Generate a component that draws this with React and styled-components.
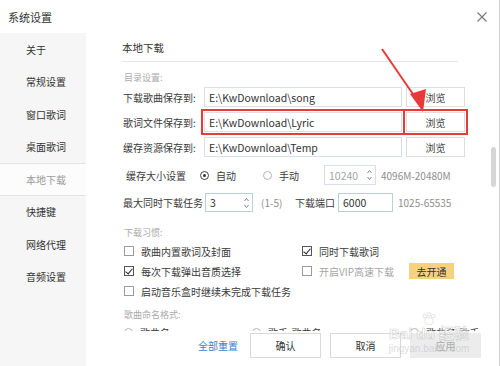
import React from "react";
import styled, { createGlobalStyle } from "styled-components";

const Global = createGlobalStyle`
  html, body { margin: 0; padding: 0; background: #fff; }
  * { box-sizing: border-box; }
`;

const navItems = ["关于", "常规设置", "窗口歌词", "桌面歌词", "本地下载", "快捷键", "网络代理", "音频设置"];

const paths = [
  { label: "下载歌曲保存到:", value: "E:\\KwDownload\\song" },
  { label: "歌词文件保存到:", value: "E:\\KwDownload\\Lyric", marked: true },
  { label: "缓存资源保存到:", value: "E:\\KwDownload\\Temp" },
];

const App = () => {
  return (
    <Window>
      <Global />
      <TitleBar>
        <Title>系统设置</Title>
        <svg width="10" height="10" viewBox="0 0 10 10">
          <path d="M0.5 0.5 L9.5 9.5 M9.5 0.5 L0.5 9.5" stroke="#777" strokeWidth="1.1" />
        </svg>
      </TitleBar>
      <Body>
        <Sidebar>
          {navItems.map((item) => (
            <NavItem key={item} $active={item === "本地下载"}>{item}</NavItem>
          ))}
        </Sidebar>
        <Main>
          <Scroll>
            <Content>
              <Heading>本地下载</Heading>
              <GroupLabel $top={7}>目录设置:</GroupLabel>
              <PathList>
                {paths.map((p) => (
                  <Row key={p.label}>
                    <Label $w={82} $pad={1}>{p.label}</Label>
                    <Field $w={198} $marked={p.marked}>{p.value}</Field>
                    <Browse $marked={p.marked}>浏览</Browse>
                  </Row>
                ))}
              </PathList>

              <Row $top={8}>
                <Label $w={78} $pad={4}>缓存大小设置</Label>
                <RadioOption $w={63}><Radio $on />自动</RadioOption>
                <RadioOption $w={61}><Radio />手动</RadioOption>
                <Field $w={52} $muted>
                  10240
                  <Spin />
                </Field>
                <Hint $left={5}>4096M-20480M</Hint>
              </Row>

              <Row $top={7}>
                <Label $w={83} $pad={1}>最大同时下载任务</Label>
                <Field $w={48} $focus>
                  3
                  <Spin />
                </Field>
                <Hint $w={34} $left={8}>(1-5)</Hint>
                <Label $w={43}>下载端口</Label>
                <Field $w={55} $focus>6000</Field>
                <Hint $left={5}>1025-65535</Hint>
              </Row>

              <GroupLabel $top={12}>下载习惯:</GroupLabel>
              <CheckGrid>
                <Check><Box />歌曲内置歌词及封面</Check>
                <Check><Box $on />同时下载歌词</Check>
                <Check><Box $on />每次下载弹出音质选择</Check>
                <Check $muted>
                  <Box />开启VIP高速下载
                  <VipButton>去开通</VipButton>
                </Check>
                <Check $wide><Box />启动音乐盒时继续未完成下载任务</Check>
              </CheckGrid>

              <GroupLabel $top={5}>歌曲命名格式:</GroupLabel>
              <Row>
                <RadioOption $w={130} $pad={2}><Radio />歌曲名</RadioOption>
                <RadioOption $w={158}><Radio />歌手-歌曲名</RadioOption>
                <RadioOption><Radio />歌曲名-歌手</RadioOption>
              </Row>
            </Content>
            <ScrollTrack>
              <Thumb />
            </ScrollTrack>
          </Scroll>
          <Footer>
            <ResetLink>全部重置</ResetLink>
            <Button>确认</Button>
            <Button>取消</Button>
            <Button $disabled>应用</Button>
          </Footer>
        </Main>
      </Body>

      <Arrow width="500" height="366" viewBox="0 0 500 366">
        <line x1="382" y1="49" x2="417" y2="100" stroke="#e8393b" strokeWidth="2" />
        <polygon points="423,112 410,94 426,89" fill="#e8393b" />
      </Arrow>

      <Watermark>
        <Paw viewBox="0 0 24 20">
          <circle cx="6" cy="6" r="2.5" />
          <circle cx="12" cy="3.5" r="2.5" />
          <circle cx="18" cy="6" r="2.5" />
          <ellipse cx="12" cy="13" rx="6" ry="5" />
        </Paw>
        <Brand>Bai du 经验</Brand>
        <Domain>jingyan.baidu.com</Domain>
      </Watermark>
    </Window>
  );
};

const Window = styled.div`
  position: relative;
  width: 500px;
  height: 366px;
  display: flex;
  flex-direction: column;
  overflow: hidden;
  background: #fff;
  color: #3a3a3a;
  font-family: "Noto Sans CJK SC", "Liberation Sans", sans-serif;
  font-size: 10px;
  border-right: 1px solid #cfcfcf;
`;

const TitleBar = styled.div`
  height: 33px;
  flex-shrink: 0;
  display: flex;
  align-items: center;
  justify-content: space-between;
  padding: 0 12px 0 8px;
`;

const Title = styled.div`
  font-size: 11px;
  color: #333;
`;

const Body = styled.div`
  flex: 1;
  display: flex;
  min-height: 0;
`;

const Sidebar = styled.div`
  width: 86px;
  flex-shrink: 0;
  display: flex;
  flex-direction: column;
  background: #f6f6f6;
`;

const NavItem = styled.div`
  height: 32.5px;
  display: flex;
  align-items: center;
  padding-left: 26px;
  font-size: 10px;
  color: ${(p) => (p.$active ? "#9a9a9a" : "#333")};
  background: ${(p) => (p.$active ? "#fcfcfc" : "transparent")};
  border-top: 1px solid ${(p) => (p.$active ? "#e4e4e4" : "transparent")};
  border-bottom: 1px solid ${(p) => (p.$active ? "#e4e4e4" : "transparent")};
`;

const Main = styled.div`
  flex: 1;
  display: flex;
  flex-direction: column;
  min-width: 0;
`;

const Scroll = styled.div`
  height: 298px;
  display: flex;
  overflow: hidden;
`;

const Content = styled.div`
  flex: 1;
  padding-left: 36px;
  display: flex;
  flex-direction: column;
`;

const Heading = styled.div`
  width: 336px;
  height: 29px;
  flex-shrink: 0;
  display: flex;
  align-items: center;
  font-size: 10.5px;
  color: #333;
  border-bottom: 1px solid #e6e6e6;
`;

const GroupLabel = styled.div`
  height: 16px;
  flex-shrink: 0;
  display: flex;
  align-items: center;
  margin-top: ${(p) => p.$top || 0}px;
  padding-left: 2px;
  font-size: 9px;
  color: #ababab;
`;

const PathList = styled.div`
  display: flex;
  flex-direction: column;
  gap: 5px;
  margin-top: 2px;
`;

const Row = styled.div`
  height: 20px;
  flex-shrink: 0;
  display: flex;
  align-items: center;
  margin-top: ${(p) => p.$top || 0}px;
`;

const Label = styled.div`
  width: ${(p) => p.$w}px;
  flex-shrink: 0;
  padding-left: ${(p) => p.$pad || 0}px;
  white-space: nowrap;
  color: #3a3a3a;
`;

const Field = styled.div`
  position: relative;
  width: ${(p) => p.$w}px;
  height: ${(p) => (p.$focus ? 19 : 20)}px;
  flex-shrink: 0;
  display: flex;
  align-items: center;
  padding-left: 4px;
  font-size: 10.5px;
  color: ${(p) => (p.$muted ? "#a5a5a5" : "#333")};
  border: 1px solid ${(p) => (p.$focus ? "#b9cfe0" : "#d8dfe6")};
  background: #fff;
  outline: ${(p) => (p.$marked ? "2px solid #e8393b" : "none")};
  outline-offset: 1px;
`;

const Browse = styled.div`
  width: 59px;
  height: 20px;
  margin-left: 4px;
  flex-shrink: 0;
  display: flex;
  align-items: center;
  justify-content: center;
  border: 1px solid #dedede;
  color: #444;
  outline: ${(p) => (p.$marked ? "2px solid #e8393b" : "none")};
  outline-offset: 1px;
`;

const RadioOption = styled.div`
  width: ${(p) => (p.$w ? `${p.$w}px` : "auto")};
  flex-shrink: 0;
  display: flex;
  align-items: center;
  gap: 7px;
  padding-left: ${(p) => p.$pad || 0}px;
  white-space: nowrap;
`;

const Radio = styled.span`
  width: 9px;
  height: 9px;
  border-radius: 50%;
  border: 1px solid ${(p) => (p.$on ? "#444" : "#b5b5b5")};
  display: flex;
  align-items: center;
  justify-content: center;
  &::after {
    content: "";
    width: 3px;
    height: 3px;
    border-radius: 50%;
    background: ${(p) => (p.$on ? "#333" : "transparent")};
  }
`;

const SpinWrap = styled.svg`
  position: absolute;
  right: 3px;
  top: 3px;
`;

const Spin = () => (
  <SpinWrap width="5" height="12" viewBox="0 0 5 12">
    <path d="M0.5 4 L2.5 1.5 L4.5 4" fill="none" stroke="#777" strokeWidth="0.9" />
    <path d="M0.5 8 L2.5 10.5 L4.5 8" fill="none" stroke="#777" strokeWidth="0.9" />
  </SpinWrap>
);

const Hint = styled.div`
  width: ${(p) => (p.$w ? `${p.$w}px` : "auto")};
  flex-shrink: 0;
  margin-left: ${(p) => p.$left || 0}px;
  color: #8e8e8e;
  font-size: 10px;
  white-space: nowrap;
`;

const CheckGrid = styled.div`
  display: grid;
  grid-template-columns: 178px 1fr;
  grid-auto-rows: 20px;
  margin-top: 1px;
`;

const Check = styled.div`
  display: flex;
  align-items: center;
  gap: 7px;
  padding-left: 2px;
  white-space: nowrap;
  color: ${(p) => (p.$muted ? "#a5a5a5" : "#3a3a3a")};
  grid-column: ${(p) => (p.$wide ? "1 / span 2" : "auto")};
`;

const Box = styled.span`
  width: 10px;
  height: 10px;
  flex-shrink: 0;
  border: 1px solid ${(p) => (p.$on ? "#555" : "#9b9b9b")};
  position: relative;
  &::after {
    content: "";
    display: ${(p) => (p.$on ? "block" : "none")};
    position: absolute;
    left: 2px;
    top: 0px;
    width: 3px;
    height: 6px;
    border-right: 1.5px solid #222;
    border-bottom: 1.5px solid #222;
    transform: rotate(40deg);
  }
`;

const VipButton = styled.div`
  margin-left: 8px;
  width: 45px;
  height: 16px;
  display: flex;
  align-items: center;
  justify-content: center;
  background: #f6d27f;
  color: #333;
  font-size: 10px;
`;

const ScrollTrack = styled.div`
  width: 10px;
  flex-shrink: 0;
  padding: 114px 0 0 2px;
`;

const Thumb = styled.div`
  width: 5px;
  height: 40px;
  border-radius: 3px;
  background: #d6d6d6;
`;

const Footer = styled.div`
  height: 35px;
  flex-shrink: 0;
  display: flex;
  align-items: flex-start;
  justify-content: flex-end;
  gap: 9px;
  padding: 2px 18px 0 0;
  background: #fff;
`;

const ResetLink = styled.div`
  height: 25px;
  display: flex;
  align-items: center;
  margin-right: 3px;
  color: #3b7fd0;
  font-size: 10px;
`;

const Button = styled.div`
  width: 71px;
  height: 25px;
  display: flex;
  align-items: center;
  justify-content: center;
  font-size: 10px;
  color: ${(p) => (p.$disabled ? "#aaa" : "#333")};
  background: ${(p) => (p.$disabled ? "#ececec" : "#fff")};
  border: 1px solid ${(p) => (p.$disabled ? "#ececec" : "#d9d9d9")};
`;

const Arrow = styled.svg`
  position: absolute;
  left: 0;
  top: 0;
  pointer-events: none;
`;

const Watermark = styled.div`
  position: absolute;
  left: 384px;
  top: 312px;
  width: 90px;
  pointer-events: none;
  display: flex;
  flex-direction: column;
  align-items: center;
  color: rgba(200, 200, 200, 0.55);
  font-family: "Liberation Sans", "Noto Sans CJK SC", sans-serif;
`;

const Paw = styled.svg`
  width: 18px;
  height: 14px;
  fill: none;
  stroke: rgba(190, 190, 190, 0.6);
  stroke-width: 1;
`;

const Brand = styled.div`
  font-size: 15px;
  font-weight: bold;
  line-height: 15px;
  -webkit-text-stroke: 0.6px rgba(180, 180, 180, 0.6);
  color: rgba(255, 255, 255, 0.5);
`;

const Domain = styled.div`
  font-size: 10px;
  line-height: 12px;
  margin-top: 2px;
  color: rgba(190, 190, 190, 0.55);
`;

export default App;
